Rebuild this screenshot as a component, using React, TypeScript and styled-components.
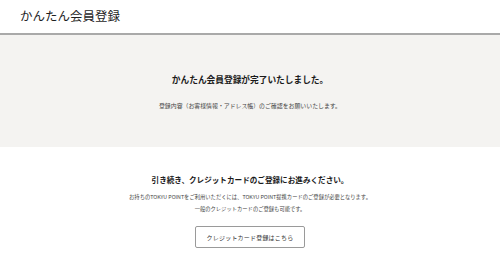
import React from 'react';
import styled, { createGlobalStyle } from 'styled-components';

const GlobalStyle = createGlobalStyle`
  html, body {
    margin: 0;
    padding: 0;
    background: #ffffff;
  }
  body {
    font-family: "Noto Sans CJK JP", "Noto Sans", sans-serif;
    color: #222222;
  }
`;

const Header = styled.header`
  height: 33px;
  display: flex;
  align-items: center;
  padding: 0 20px;
  border-bottom: 2px solid #a9a9a9;
  box-sizing: content-box;
`;

const PageTitle = styled.h1`
  margin: 0;
  font-size: 12.5px;
  font-weight: 400;
  line-height: 1;
  color: #1e1e1e;
`;

const Section = styled.section<{ $gray?: boolean }>`
  display: flex;
  flex-direction: column;
  align-items: center;
  background: ${({ $gray }) => ($gray ? '#f4f3f1' : '#ffffff')};
  padding: ${({ $gray }) => ($gray ? '38px 0 0' : '26px 0 0')};
  height: ${({ $gray }) => ($gray ? '112px' : 'auto')};
  box-sizing: border-box;
`;

const Heading = styled.h2<{ $size: number }>`
  margin: 0;
  font-size: ${({ $size }) => $size}px;
  font-weight: 700;
  line-height: 14px;
  color: #1a1a1a;
`;

const Note = styled.p<{ $size: number; $top: number }>`
  margin: ${({ $top }) => $top}px 0 0;
  font-size: ${({ $size }) => $size}px;
  line-height: 12px;
  color: #444444;
  text-align: center;
`;

const LinkButton = styled.a`
  margin-top: 11px;
  width: 110px;
  height: 22px;
  box-sizing: border-box;
  display: flex;
  align-items: center;
  justify-content: center;
  border: 1px solid #9a9a9a;
  border-radius: 2px;
  background: #ffffff;
  font-size: 6px;
  color: #333333;
  text-decoration: none;
  letter-spacing: 0.2px;
`;

const App = () => {
  return (
    <>
      <GlobalStyle />
      <Header>
        <PageTitle>かんたん会員登録</PageTitle>
      </Header>
      <Section $gray>
        <Heading $size={8.7}>かんたん会員登録が完了いたしました。</Heading>
        <Note $size={5.9} $top={13}>
          登録内容（お客様情報・アドレス帳）のご確認をお願いいたします。
        </Note>
      </Section>
      <Section>
        <Heading $size={7.6}>引き続き、クレジットカードのご登録にお進みください。</Heading>
        <Note $size={5.3} $top={4}>
          お持ちのTOKYU POINTをご利用いただくには、TOKYU POINT提携カードのご登録が必要となります。
          <br />
          一般のクレジットカードのご登録も可能です。
        </Note>
        <LinkButton href="#">クレジットカード登録はこちら</LinkButton>
      </Section>
    </>
  );
};

export default App;
